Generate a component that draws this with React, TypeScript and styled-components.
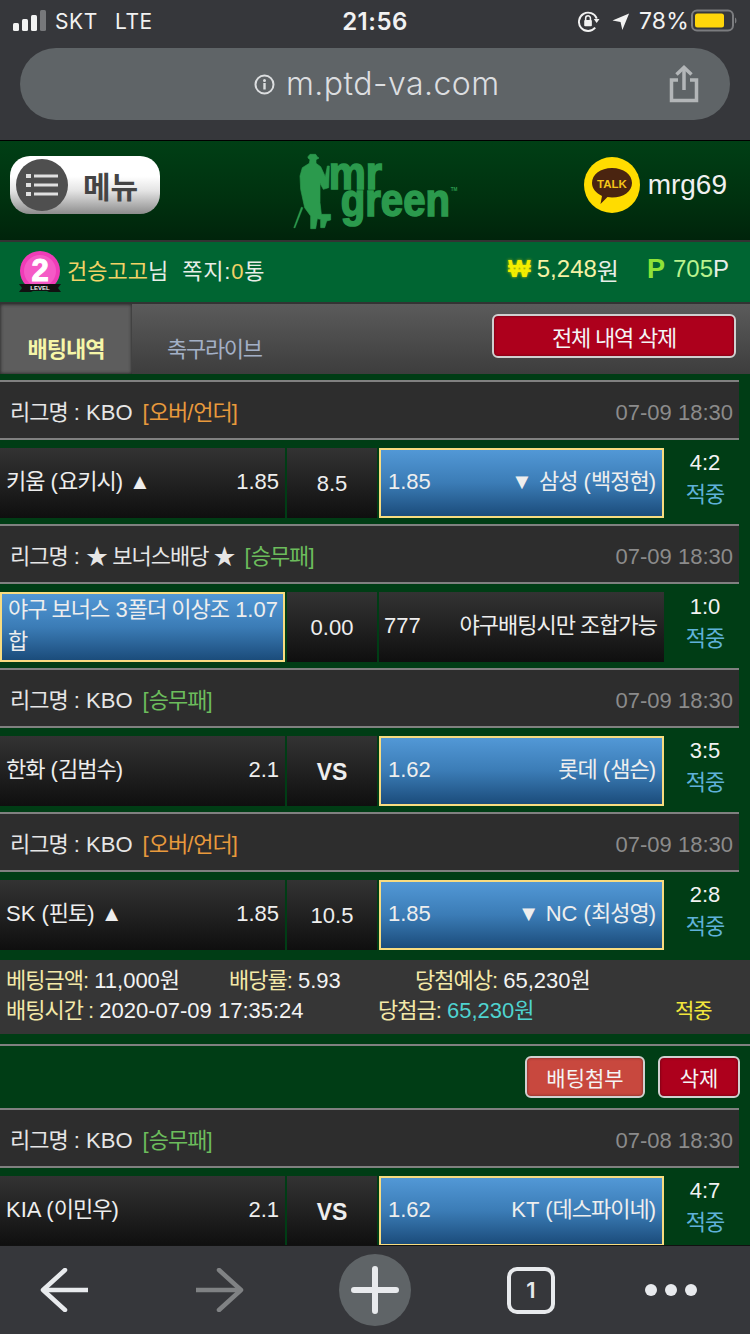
import React from 'react'
import styled, { createGlobalStyle } from 'styled-components'

const KR = `"Liberation Sans", "Noto Sans CJK KR", sans-serif`

const GlobalStyle = createGlobalStyle`
  html, body {
    margin: 0;
    padding: 0;
    background: #36373b;
  }
  * {
    box-sizing: border-box;
  }
`

const Page = styled.div`
  width: 750px;
  height: 1334px;
  display: flex;
  flex-direction: column;
  overflow: hidden;
  font-family: ${KR};
  color: #eee;
`

/* browser chrome */
const BrowserTop = styled.div`
  height: 140px;
  flex: none;
  background: #36373b;
  padding: 0 20px;
  display: flex;
  flex-direction: column;
`
const StatusBar = styled.div`
  height: 48px;
  margin: 0 -20px;
  padding: 0 13px 6px;
  display: grid;
  grid-template-columns: 1fr auto 1fr;
  align-items: center;
  color: #f2f2f2;
  font-family: Inter, "Liberation Sans", sans-serif;
  font-size: 22px;
`
const StatusLeft = styled.div`
  display: flex;
  align-items: center;
`
const Carrier = styled.span<{ $gap: number }>`
  margin-left: ${p => p.$gap}px;
  font-weight: 400;
  font-size: 21px;
  letter-spacing: 0.6px;
`
const Clock = styled.div`
  font-size: 24px;
  font-weight: 600;
  letter-spacing: 0.5px;
`
const StatusRight = styled.div`
  display: flex;
  align-items: center;
  justify-content: flex-end;
`
const Percent = styled.span`
  margin: 0 2px 0 9px;
  font-size: 23px;
  letter-spacing: 0.2px;
`
const UrlBar = styled.div`
  height: 72px;
  border-radius: 36px;
  background: #5f6467;
  display: flex;
  align-items: center;
  padding-left: 234px;
  color: #dcdee0;
  font-family: Inter, "Liberation Sans", sans-serif;
  font-size: 32px;
  font-weight: 300;
`
const UrlText = styled.span`
  margin: 0 0 2px 11px;
  flex: 1;
  letter-spacing: 0.45px;
`
const ShareSlot = styled.div`
  width: 64px;
  margin-right: 14px;
  display: flex;
  justify-content: center;
`

/* site header */
const Main = styled.div`
  flex: 1;
  min-height: 0;
  overflow: hidden;
  background: #003d15;
`
const Header = styled.header`
  height: 100px;
  border-top: 1px solid #000;
  padding: 0 23px 11px 10px;
  background: linear-gradient(#003f15, #00310f 60%, #00240b);
  display: flex;
  align-items: center;
`
const MenuButton = styled.div`
  width: 150px;
  height: 58px;
  border-radius: 20px;
  background: linear-gradient(#fff 35%, #e4e4e4 60%, #8d8d8d);
  display: flex;
  align-items: center;
  padding-left: 6px;
  gap: 15px;
  color: #444;
  font-size: 30px;
  font-weight: 700;
`
const MenuIcon = styled.div`
  width: 52px;
  height: 52px;
  border-radius: 50%;
  background: #4f4f4f;
  display: flex;
  align-items: center;
  justify-content: center;
`
const Logo = styled.svg`
  margin: 11px 0 0 124px;
  flex: none;
`
const Talk = styled.div`
  margin-left: auto;
  display: flex;
  align-items: center;
  gap: 8px;
  font-size: 28px;
  color: #f0f0f0;
`

const InfoBar = styled.div`
  height: 64px;
  border-top: 2px solid #333;
  border-bottom: 2px solid #333;
  background: #006532;
  padding: 0 21px 0 19px;
  display: flex;
  align-items: center;
  font-size: 22px;
  color: #e8eee8;
`
const InfoText = styled.span`
  margin-bottom: 6px;
`
const Gold = styled.span`
  color: #f3d266;
`
const MsgLabel = styled.span`
  margin: 0 0 6px 14px;
  letter-spacing: 0.8px;
`
const InfoRight = styled.div`
  margin: 0 0 6px auto;
  display: flex;
  align-items: center;
  font-size: 24px;
`
const Won = styled.span`
  color: #f4ee00;
  font-size: 24px;
  font-weight: 700;
  margin-right: 6px;
  text-shadow: 0 0 3px #d8d000;
`
const Cream = styled.span`
  color: #f6f2a4;
`
const PointMark = styled.span`
  margin-left: 28px;
  margin-right: 8px;
  color: #8fe338;
  font-size: 27px;
  font-weight: 700;
`
const Lime = styled.span`
  color: #b9f28e;
`

const TabBar = styled.div`
  height: 70px;
  background: linear-gradient(#5b5b5b, #3d3d3d);
  display: flex;
  align-items: stretch;
  padding-right: 14px;
`
const ActiveTab = styled.div`
  width: 132px;
  background: #5d5d5d;
  box-shadow: inset 0 0 3px 1px #333;
  color: #f6f6a8;
  font-size: 22px;
  font-weight: 700;
  letter-spacing: -1px;
  display: flex;
  align-items: flex-end;
  justify-content: center;
  padding-bottom: 11px;
`
const IdleTab = styled.div`
  margin-left: 35px;
  color: #a3b0c6;
  font-size: 22px;
  letter-spacing: -1.3px;
  display: flex;
  align-items: flex-end;
  padding-bottom: 11px;
`
const ActionButton = styled.button<{ $tone: string; $w: number }>`
  width: ${p => p.$w}px;
  height: 42px;
  padding: 0;
  border: 2px solid #d0d0d0;
  border-radius: 6px;
  background: ${p => p.$tone};
  color: #f4f4f4;
  font-family: ${KR};
  font-size: 21px;
  box-shadow: inset 0 0 3px rgba(0, 0, 0, 0.45);
`
const ClearAll = styled(ActionButton)`
  height: 44px;
  margin: 10px 0 0 auto;
  font-size: 22px;
  letter-spacing: -1.2px;
`

/* bet list */
const BetList = styled.div`
  padding-top: 6px;
`
const Hangul = styled.span`
  letter-spacing: -1px;
`
const LeagueRow = styled.div`
  width: 739px;
  height: 60px;
  border-top: 2px solid #808080;
  border-bottom: 2px solid #808080;
  background: #2d2d2d;
  padding: 16px 6px 0 10px;
  display: flex;
  align-items: baseline;
  font-size: 22px;
  line-height: 30px;
  color: #e6e6e6;
`
const LeagueTag = styled.span<{ $color: string }>`
  margin-left: 10px;
  color: ${p => p.$color};
`
const GameDate = styled.span`
  margin-left: auto;
  color: #8b8b8b;
`
const MatchRow = styled.div`
  height: 70px;
  margin: 8px 0 6px;
  display: grid;
  grid-template-columns: 285px 90px 285px 78px;
  grid-template-rows: 70px;
  column-gap: 2px;
  font-size: 22px;
`
const Cell = styled.div<{ $picked?: boolean; $multi?: boolean }>`
  min-width: 0;
  display: flex;
  align-items: baseline;
  justify-content: space-between;
  padding: ${p => (p.$multi ? 0 : p.$picked ? 17 : 19)}px 6px 0;
  line-height: 30px;
  color: #eee;
  background: ${p => (p.$picked
    ? 'linear-gradient(#5298d6, #3b7cb6 50%, #1b4c7b)'
    : 'linear-gradient(#333, #0f0f0f)')};
  border: ${p => (p.$picked ? '2px solid #f8dc80' : 'none')};
`
const AwayCell = styled(Cell)`
  padding-left: ${p => (p.$picked ? 7 : 5)}px;
  padding-right: ${p => (p.$picked ? 6 : 7)}px;
`
const BonusName = styled.span`
  line-height: 32px;
  white-space: pre;
`
const Line = styled.span`
  flex: none;
`
const CenterCell = styled(Cell)<{ $vs?: boolean }>`
  align-items: center;
  justify-content: center;
  font-weight: ${p => (p.$vs ? 700 : 400)};
  font-size: ${p => (p.$vs ? 23 : 22)}px;
  padding: ${p => (p.$vs ? 1 : 2)}px 0 0;
`
const ScoreCell = styled.div`
  margin-top: -1px;
  display: flex;
  flex-direction: column;
  align-items: center;
  line-height: 32px;
  color: #f2f2f2;
`
const HitLabel = styled.span`
  color: #5fb1d9;
  letter-spacing: -1px;
`

const Summary = styled.div`
  height: 74px;
  margin-top: 10px;
  background: #363636;
  padding: 6px 6px 0;
  font-size: 22px;
  line-height: 30px;
  color: #f3f3f3;
`
const SummaryRow = styled.div<{ $cols: string }>`
  display: grid;
  grid-template-columns: ${p => p.$cols};
  height: 30px;
  align-items: baseline;
`
const Label = styled.span`
  color: #f3e9a8;
  letter-spacing: -1px;
`
const Aqua = styled.span`
  color: #4fd3d0;
`
const Result = styled.span`
  color: #f2e63c;
  font-size: 21px;
  letter-spacing: -1px;
`
const SlipActions = styled.div`
  height: 64px;
  margin-top: 10px;
  border-top: 2px solid #808080;
  padding: 10px 10px 0 0;
  display: flex;
  justify-content: flex-end;
  gap: 13px;
`

/* browser toolbar */
const BottomBar = styled.nav`
  height: 89px;
  flex: none;
  border-top: 1px solid #111;
  background: #36373b;
  display: grid;
  grid-template-columns: 128px 184px 126px 186px 94px;
  justify-items: center;
  align-items: center;
`
const PlusCircle = styled.div`
  width: 72px;
  height: 72px;
  border-radius: 50%;
  background: #5f6467;
  display: flex;
  align-items: center;
  justify-content: center;
`
const TabCount = styled.div`
  width: 48px;
  height: 47px;
  border: 4px solid #e8eaed;
  border-radius: 10px;
  display: flex;
  align-items: center;
  justify-content: center;
  color: #e8eaed;
  font-family: Inter, "Liberation Sans", sans-serif;
  font-size: 22px;
  font-weight: 600;
`
const Dots = styled.div`
  display: flex;
  gap: 8px;
`
const Dot = styled.span`
  width: 12px;
  height: 12px;
  border-radius: 50%;
  background: #e8eaed;
`

// hangul in the reference runs narrower than Noto at the same size as the latin
function Txt({ text }: { text: string }) {
  const parts = text.split(/([\uAC00-\uD7A3★]+(?: [\uAC00-\uD7A3★]+)*)/)
  return (
    <>
      {parts.map((part, i) => (i % 2 === 1 ? <Hangul key={i}>{part}</Hangul> : part))}
    </>
  )
}

function Signal() {
  return (
    <svg width="34" height="22" viewBox="0 0 34 22">
      <rect x="0" y="13" width="6" height="8" rx="1.5" fill="#f2f2f2" />
      <rect x="9" y="9" width="6" height="12" rx="1.5" fill="#f2f2f2" />
      <rect x="18" y="5" width="6" height="16" rx="1.5" fill="#f2f2f2" />
      <rect x="27" y="0" width="6" height="21" rx="1.5" fill="#77787b" />
    </svg>
  )
}

function RotationLock() {
  return (
    <svg width="22" height="23" viewBox="0 0 23 24" fill="none">
      <path d="M18 18.5A9.6 9.6 0 1 1 19.6 9" stroke="#f2f2f2" strokeWidth="2" />
      <path d="M16.5 9.5h6l-3 4z" fill="#f2f2f2" />
      <rect x="6.5" y="10.5" width="8" height="6.5" rx="1" fill="#f2f2f2" />
      <path d="M8 11V8.500a2.500 2.500 0 0 1 5 0V11" stroke="#f2f2f2" strokeWidth="1.6" />
    </svg>
  )
}

function LocationArrow() {
  return (
    <svg width="18" height="19" viewBox="0 0 20 20" style={{ marginLeft: 12 }}>
      <path d="M19 1 L11.5 19.5 L9.5 10.5 L0.5 8.8 Z" fill="#f2f2f2" />
    </svg>
  )
}

function Battery() {
  return (
    <svg width="46" height="24" viewBox="0 0 46 24">
      <rect x="1" y="1.500" width="41" height="20" rx="5" fill="none" stroke="#7b7c7f" strokeWidth="2" />
      <rect x="4" y="4.500" width="29" height="14" rx="2.500" fill="#ffd60a" />
      <path d="M44 8.500c1.800.6 2 5.400 0 6z" fill="#7b7c7f" />
    </svg>
  )
}

function InfoCircle() {
  return (
    <svg width="21" height="21" viewBox="0 0 21 21" fill="none">
      <circle cx="10.500" cy="10.500" r="9" stroke="#dcdee0" strokeWidth="2" />
      <rect x="9.300" y="9" width="2.400" height="6.500" fill="#dcdee0" />
      <circle cx="10.500" cy="6.500" r="1.500" fill="#dcdee0" />
    </svg>
  )
}

function ShareIcon() {
  return (
    <svg width="30" height="38" viewBox="0 0 30 38" fill="none" stroke="#b3b6b8" strokeWidth="3.500">
      <path d="M9 15H2.500v20.500h25V15H21" />
      <path d="M15 25V3" />
      <path d="M7.500 9.500 15 2.500l7.500 7" />
    </svg>
  )
}

function ListGlyph() {
  return (
    <svg width="32" height="26" viewBox="0 0 32 26" fill="#e0e0e0">
      <rect x="0" y="2" width="5" height="4" />
      <rect x="0" y="11" width="5" height="4" />
      <rect x="0" y="20" width="5" height="4" />
      <rect x="8" y="2.500" width="24" height="3" />
      <rect x="8" y="11.500" width="24" height="3" />
      <rect x="8" y="20.500" width="24" height="3" />
    </svg>
  )
}

function MrGreenLogo() {
  return (
    <Logo width="180" height="90" viewBox="0 0 540 270">
      <g fill="#2b9a4d" stroke="#2b9a4d">
        <path strokeWidth="2" d="M72 32 L78 25 L95 25 L100 33 L105 36 L96 41 L96 52 L110 62 L124 92 L130 60 L136 60 L134 125 L118 130 L108 112 L108 170 L112 205 L140 205 L140 222 L128 225 L122 245 L110 245 L110 220 L100 218 L95 248 L80 248 L80 210 L62 185 L50 130 L48 90 L55 65 L76 52 L78 41 L72 36 Z" />
        <path strokeWidth="1" d="M52 183 L57 185 L33 246 L29 245 Z" />
        <text x="134" y="129" strokeWidth="5" fontFamily="Liberation Sans" fontWeight="700" fontSize="140" textLength="160" lengthAdjust="spacingAndGlyphs">mr</text>
        <text x="170" y="210" strokeWidth="5" fontFamily="Liberation Sans" fontWeight="700" fontSize="140" textLength="328" lengthAdjust="spacingAndGlyphs">green</text>
        <text x="500" y="136" stroke="none" fontFamily="Liberation Sans" fontWeight="700" fontSize="14">TM</text>
      </g>
    </Logo>
  )
}

function KakaoTalk() {
  return (
    <svg width="56" height="56" viewBox="0 0 56 56">
      <circle cx="28" cy="28" r="28" fill="#ffdc00" />
      <path d="M28 11c11.500 0 20 6.500 20 15s-8.500 14.500-20 14.500c-1.600 0-3-.1-4.500-.4L16.500 47l1.500-8C12 36 8 31.500 8 26c0-8.500 8.500-15 20-15z" fill="#4a2410" />
      <text x="28" y="30.500" textAnchor="middle" fontFamily="Liberation Sans" fontWeight="700" fontSize="11.500" fill="#f5c518">TALK</text>
    </svg>
  )
}

function LevelBadge() {
  return (
    <svg width="42" height="42" viewBox="0 0 42 42" style={{ marginRight: 6 }}>
      <circle cx="21" cy="20" r="20" fill="#f03cb8" />
      <circle cx="21" cy="20" r="16" fill="#f55ac6" />
      <text x="21" y="30" textAnchor="middle" fontFamily="Liberation Sans" fontWeight="700" fontSize="31" fill="#fff" stroke="#fff" strokeWidth="1">2</text>
      <path d="M0 33h42l-3 4 3 4H30l-2-1H14l-2 1H0l3-4z" fill="#111" />
      <text x="21" y="38.500" textAnchor="middle" fontFamily="Liberation Sans" fontWeight="700" fontSize="6" fill="#eee">LEVEL</text>
    </svg>
  )
}

function ArrowLeft({ color }: { color: string }) {
  return (
    <svg width="48" height="44" viewBox="0 0 48 44" fill="none" stroke={color} strokeWidth="4.500" strokeLinecap="round">
      <path d="M3 22h45" strokeLinecap="butt" />
      <path d="M25 2 3 22l22 20" style={{ strokeLinejoin: 'round' }} />
    </svg>
  )
}

function ArrowRight({ color }: { color: string }) {
  return (
    <svg width="48" height="44" viewBox="0 0 48 44" fill="none" stroke={color} strokeWidth="4.500" strokeLinecap="round">
      <path d="M0 22h45" strokeLinecap="butt" />
      <path d="M23 2l22 20-22 20" style={{ strokeLinejoin: 'round' }} />
    </svg>
  )
}

function PlusGlyph() {
  return (
    <svg width="48" height="48" viewBox="0 0 48 48" stroke="#e8eaed" strokeWidth="6" strokeLinecap="round">
      <path d="M24 3v42M3 24h42" />
    </svg>
  )
}

interface Bet {
  league: string;
  tag: string;
  tagColor: string;
  date: string;
  home: string;
  homeOdds?: string;
  center: string;
  awayOdds: string;
  away: string;
  score: string;
  homePicked?: boolean;
}

const ORANGE = '#e89a3c'
const GREEN = '#6cbc5c'

const firstSlip: Bet[] = [
  { league: '리그명 : KBO', tag: '[오버/언더]', tagColor: ORANGE, date: '07-09 18:30', home: '키움 (요키시) ▲', homeOdds: '1.85', center: '8.5', awayOdds: '1.85', away: '▼ 삼성 (백정현)', score: '4:2' },
  { league: '리그명 : ★ 보너스배당 ★', tag: '[승무패]', tagColor: GREEN, date: '07-09 18:30', home: '야구 보너스 3폴더 이상조 1.07\n합', center: '0.00', awayOdds: '777', away: '야구배팅시만 조합가능', score: '1:0', homePicked: true },
  { league: '리그명 : KBO', tag: '[승무패]', tagColor: GREEN, date: '07-09 18:30', home: '한화 (김범수)', homeOdds: '2.1', center: 'VS', awayOdds: '1.62', away: '롯데 (샘슨)', score: '3:5' },
  { league: '리그명 : KBO', tag: '[오버/언더]', tagColor: ORANGE, date: '07-09 18:30', home: 'SK (핀토) ▲', homeOdds: '1.85', center: '10.5', awayOdds: '1.85', away: '▼ NC (최성영)', score: '2:8' },
]

const secondSlip: Bet[] = [
  { league: '리그명 : KBO', tag: '[승무패]', tagColor: GREEN, date: '07-08 18:30', home: 'KIA (이민우)', homeOdds: '2.1', center: 'VS', awayOdds: '1.62', away: 'KT (데스파이네)', score: '4:7' },
]

function BetBlock({ bet }: { bet: Bet }) {
  return (
    <>
      <LeagueRow>
        <span><Txt text={bet.league} /></span>
        <LeagueTag $color={bet.tagColor}><Txt text={bet.tag} /></LeagueTag>
        <GameDate>{bet.date}</GameDate>
      </LeagueRow>
      <MatchRow>
        <Cell $picked={bet.homePicked} $multi={!bet.homeOdds}>
          {bet.homeOdds
            ? <Line><Txt text={bet.home} /></Line>
            : <BonusName><Txt text={bet.home} /></BonusName>}
          {bet.homeOdds && <Line>{bet.homeOdds}</Line>}
        </Cell>
        <CenterCell $vs={bet.center === 'VS'}>{bet.center}</CenterCell>
        <AwayCell $picked={!bet.homePicked}>
          <Line>{bet.awayOdds}</Line>
          <Line><Txt text={bet.away} /></Line>
        </AwayCell>
        <ScoreCell>
          <span>{bet.score}</span>
          <HitLabel>적중</HitLabel>
        </ScoreCell>
      </MatchRow>
    </>
  )
}

export default function App() {
  return (
    <Page>
      <GlobalStyle />
      <BrowserTop>
        <StatusBar>
          <StatusLeft>
            <Signal />
            <Carrier $gap={8}>SKT</Carrier>
            <Carrier $gap={17}>LTE</Carrier>
          </StatusLeft>
          <Clock>21:56</Clock>
          <StatusRight>
            <RotationLock />
            <LocationArrow />
            <Percent>78%</Percent>
            <Battery />
          </StatusRight>
        </StatusBar>
        <UrlBar>
          <InfoCircle />
          <UrlText>m.ptd-va.com</UrlText>
          <ShareSlot><ShareIcon /></ShareSlot>
        </UrlBar>
      </BrowserTop>

      <Main>
        <Header>
          <MenuButton>
            <MenuIcon><ListGlyph /></MenuIcon>
            메뉴
          </MenuButton>
          <MrGreenLogo />
          <Talk>
            <KakaoTalk />
            mrg69
          </Talk>
        </Header>

        <InfoBar>
          <LevelBadge />
          <InfoText><Gold>건승고고</Gold>님</InfoText>
          <MsgLabel>쪽지:<Gold>0</Gold>통</MsgLabel>
          <InfoRight>
            <Won>₩</Won>
            <Cream>5,248</Cream>원
            <PointMark>P</PointMark>
            <Lime>705</Lime>P
          </InfoRight>
        </InfoBar>

        <TabBar>
          <ActiveTab>배팅내역</ActiveTab>
          <IdleTab>축구라이브</IdleTab>
          <ClearAll $tone="#ad001c" $w={244}>전체 내역 삭제</ClearAll>
        </TabBar>

        <BetList>
          {firstSlip.map((bet, i) => <BetBlock key={i} bet={bet} />)}
          <Summary>
            <SummaryRow $cols="223px 186px 1fr">
              <span><Label>베팅금액:</Label> 11,000<Txt text="원" /></span>
              <span><Label>배당률:</Label> 5.93</span>
              <span><Label>당첨예상:</Label> 65,230<Txt text="원" /></span>
            </SummaryRow>
            <SummaryRow $cols="372px 297px 1fr">
              <span><Label>배팅시간 :</Label> 2020-07-09 17:35:24</span>
              <span><Label>당첨금:</Label> <Aqua>65,230원</Aqua></span>
              <Result>적중</Result>
            </SummaryRow>
          </Summary>
          <SlipActions>
            <ActionButton $tone="#c8483e" $w={120}>배팅첨부</ActionButton>
            <ActionButton $tone="#ad001c" $w={82}>삭제</ActionButton>
          </SlipActions>
          {secondSlip.map((bet, i) => <BetBlock key={i} bet={bet} />)}
        </BetList>
      </Main>

      <BottomBar>
        <ArrowLeft color="#e8eaed" />
        <ArrowRight color="#808284" />
        <PlusCircle><PlusGlyph /></PlusCircle>
        <TabCount>1</TabCount>
        <Dots><Dot /><Dot /><Dot /></Dots>
      </BottomBar>
    </Page>
  )
}
